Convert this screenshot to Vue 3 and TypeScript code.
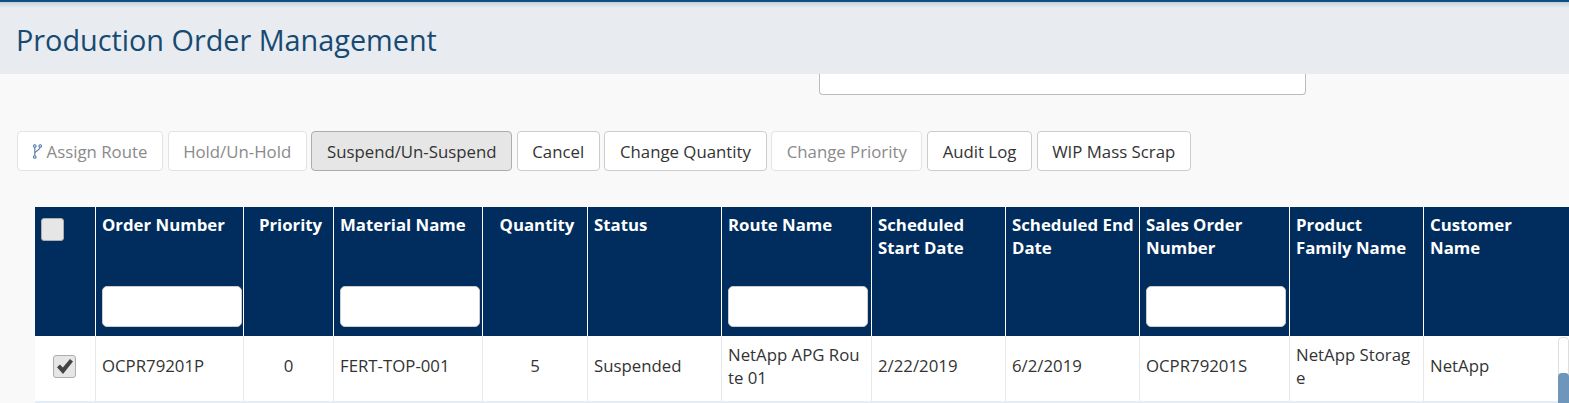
<template>
  <div class="page">
    <div class="top-rule"></div>
    <header class="page-header">
      <h1>Production Order Management</h1>
    </header>

    <main class="content">
      <div class="search-row">
        <div class="search-box"></div>
      </div>

      <div class="toolbar">
        <button
          v-for="action in actions"
          :key="action.label"
          type="button"
          class="btn"
          :class="{ disabled: action.disabled, active: action.active }"
        >
          <svg v-if="action.icon" class="route-icon" width="9" height="15" viewBox="0 0 9 15" fill="none">
            <circle cx="1.8" cy="2" r="1.3" />
            <circle cx="7.2" cy="2" r="1.3" />
            <circle cx="1.8" cy="13" r="1.3" />
            <path d="M1.8 3.3v8.4M7.2 3.3c0 3.2-5.4 3-5.4 6.2" />
          </svg>
          {{ action.label }}
        </button>
      </div>

      <div class="table-wrap">
        <div class="grid head">
          <div class="th check-cell">
            <span class="checkbox"></span>
          </div>
          <div v-for="col in columns" :key="col.title" class="th" :class="{ center: col.center }">
            <div class="th-title">{{ col.title }}</div>
            <input v-if="col.filter" class="filter" type="text" />
          </div>
        </div>

        <div class="grid body">
          <div class="td check-cell">
            <span class="checkbox checked">
              <svg width="16" height="15" viewBox="0 0 16 15">
                <path d="M0 8.2 3 5.4l2.8 3.2L13 0l3 2.6L6 15z" fill="#444" />
              </svg>
            </span>
          </div>
          <div v-for="cell in row" :key="cell.text" class="td" :class="{ center: cell.center }">
            <span class="cell-text">{{ cell.text }}</span>
          </div>
          <div class="scrollbar"><div class="thumb"></div></div>
        </div>
      </div>
    </main>
  </div>
</template>

<script setup lang="ts">
interface Action {
  label: string;
  disabled?: boolean;
  active?: boolean;
  icon?: boolean;
}

interface Column {
  title: string;
  center?: boolean;
  filter?: boolean;
}

interface Cell {
  text: string;
  center?: boolean;
}

const actions: Action[] = [
  { label: 'Assign Route', disabled: true, icon: true },
  { label: 'Hold/Un-Hold', disabled: true },
  { label: 'Suspend/Un-Suspend', active: true },
  { label: 'Cancel' },
  { label: 'Change Quantity' },
  { label: 'Change Priority', disabled: true },
  { label: 'Audit Log' },
  { label: 'WIP Mass Scrap' }
];

const columns: Column[] = [
  { title: 'Order Number', filter: true },
  { title: 'Priority', center: true },
  { title: 'Material Name', filter: true },
  { title: 'Quantity', center: true },
  { title: 'Status' },
  { title: 'Route Name', filter: true },
  { title: 'Scheduled Start Date' },
  { title: 'Scheduled End Date' },
  { title: 'Sales Order Number', filter: true },
  { title: 'Product Family Name' },
  { title: 'Customer Name' }
];

const row: Cell[] = [
  { text: 'OCPR79201P' },
  { text: '0', center: true },
  { text: 'FERT-TOP-001' },
  { text: '5', center: true },
  { text: 'Suspended' },
  { text: 'NetApp APG Route 01' },
  { text: '2/22/2019' },
  { text: '6/2/2019' },
  { text: 'OCPR79201S' },
  { text: 'NetApp Storage' },
  { text: 'NetApp' }
];
</script>

<style>
html,
body {
  margin: 0;
  background: #f9f9f9;
  overflow: hidden;
}
</style>

<style scoped>
.page {
  width: 1569px;
  height: 403px;
  overflow: hidden;
  font-family: 'Open Sans', 'Noto Sans', sans-serif;
  font-size: 16.8px;
  color: #333;
}

.top-rule {
  height: 2px;
  background: #0f4c81;
}

.page-header {
  height: 72px;
  box-sizing: border-box;
  padding: 18px 0 0 16px;
  background: linear-gradient(#c4d0dc 0, #e8ebf0 6px);
}

h1 {
  margin: 0;
  font-size: 28.8px;
  line-height: 40px;
  font-weight: 400;
  color: #164a72;
}

.content {
  padding-left: 17px;
}

.search-row {
  height: 57px;
  padding-left: 802px;
}

.search-box {
  width: 487px;
  height: 21px;
  box-sizing: border-box;
  background: #fff;
  border: 1px solid #bbb;
  border-top: 0;
  border-radius: 0 0 4px 4px;
}

.toolbar {
  display: flex;
  gap: 4.6px;
  height: 40px;
}

.btn {
  height: 40px;
  box-sizing: border-box;
  padding: 0 14.6px;
  display: flex;
  align-items: center;
  gap: 5px;
  background: #fff;
  border: 1px solid #ccc;
  border-radius: 4px;
  font: inherit;
  color: #333;
}

.btn.disabled {
  border-color: #e3e3e3;
  color: #8a8a8a;
}

.btn.active {
  background: #e6e6e6;
  border-color: #adadad;
}

.route-icon {
  stroke: #4f7ca8;
  stroke-width: 1.1;
}

.table-wrap {
  margin: 36px 0 0 18px;
}

.grid {
  display: grid;
  grid-template-columns: 60px 148px 90px 149px 105px 134px 150px 134px 134px 150px 134px 146px;
  width: 1534px;
}

.head {
  height: 129px;
  background: #002d5d;
}

.th {
  padding: 6px 0 0 6px;
  box-sizing: border-box;
  display: flex;
  flex-direction: column;
  border-left: 1px solid #fff;
  font-weight: 700;
  color: #fff;
  line-height: 23px;
}

.th.check-cell {
  border-left: 0;
  padding: 11px 0 0 6px;
}

.th.center {
  text-align: center;
  padding-left: 4px;
}

.th-title {
  height: 73px;
  padding-right: 5px;
}

.th.center .th-title {
  padding-right: 0;
}

.filter {
  width: 140px;
  height: 41px;
  box-sizing: border-box;
  background: #fff;
  border: 1px solid #ccc;
  border-radius: 5px;
  padding: 0;
}

.body {
  position: relative;
  height: 65px;
  background: #fff;
  border-bottom: 2px solid #e4edf5;
}

.td {
  display: flex;
  align-items: center;
  padding: 0 6px 6px 6px;
  border-left: 1px solid #e8e8e8;
  box-sizing: border-box;
  line-height: 23px;
  word-break: break-all;
}

.td.center {
  justify-content: center;
  padding: 0 0 6px;
}

.td.check-cell {
  border-left: 0;
  padding: 0 0 4px 18px;
}

.checkbox {
  width: 23px;
  height: 23px;
  box-sizing: border-box;
  display: flex;
  align-items: center;
  justify-content: center;
  background: #e6e6e6;
  border: 1px solid #adadad;
  border-radius: 3px;
}

.scrollbar {
  position: absolute;
  top: 1px;
  right: 0;
  width: 11px;
  height: 64px;
  box-sizing: border-box;
  background: #fff;
  border: 1px solid #ddd;
  border-radius: 4px;
}

.thumb {
  position: absolute;
  top: 35px;
  left: -1px;
  width: 11px;
  height: 30px;
  background: #6d96ba;
  border-radius: 4px 4px 0 0;
}
</style>
